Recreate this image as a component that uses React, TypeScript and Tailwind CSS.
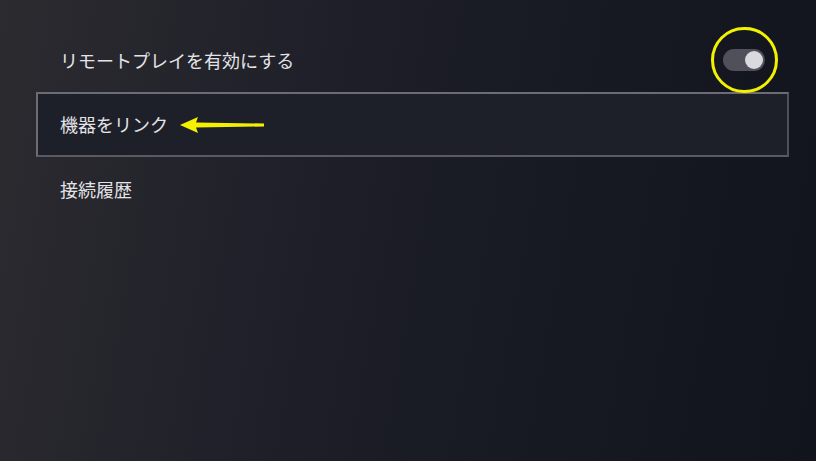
import React from 'react';

const font = { fontFamily: '"Noto Sans CJK JP", "Noto Sans", sans-serif' };

const Toggle: React.FC = () => (
  <div className="relative">
    <div className="w-[42px] h-[22px] rounded-full bg-[#50505a] flex items-center justify-end pr-[2px]">
      <div className="w-[18px] h-[18px] rounded-full bg-[#d9d9de]" />
    </div>
    {/* yellow highlight ring */}
    <div className="absolute -left-[12px] -top-[22px] w-[67px] h-[66px] rounded-full border-[3px] border-[#f2f200]" />
  </div>
);

const Arrow: React.FC = () => (
  <svg width="86" height="18" viewBox="0 0 86 18" className="ml-[12px]">
    <polygon points="0,9 18,1 16,6.5 84,7.5 84,10.5 16,11.5 18,17" fill="#f5f000" />
  </svg>
);

export default function App() {
  return (
    <div
      className="w-[816px] h-[461px] overflow-hidden bg-[linear-gradient(100deg,#2c2b30_0%,#1f2029_35%,#181a24_60%,#11131d_100%)] text-[#e4e4e8]"
      style={font}
    >
      <div className="pl-[36px] pr-[27px] pt-[28px] flex flex-col">
        <div className="h-[64px] px-[24px] flex items-center justify-between">
          <span className="text-[18px]">リモートプレイを有効にする</span>
          <Toggle />
        </div>
        <div className="h-[65px] px-[22px] flex items-center border-2 border-[#6c6c74] border-r-[#4e505c] border-b-[#5a5a64] bg-[#1e2029]">
          <span className="text-[18px]">機器をリンク</span>
          <Arrow />
        </div>
        <div className="h-[64px] px-[24px] flex items-center">
          <span className="text-[18px]">接続履歴</span>
        </div>
      </div>
    </div>
  );
}
